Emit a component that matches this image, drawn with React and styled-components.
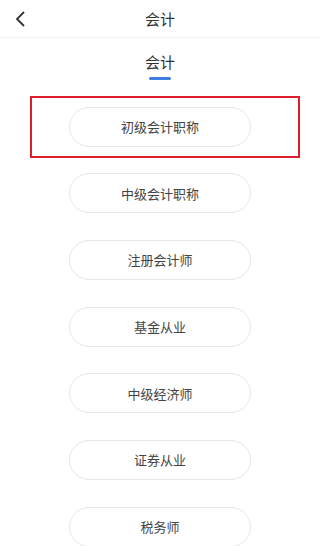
import React from "react";
import styled, { createGlobalStyle } from "styled-components";

const GlobalStyle = createGlobalStyle`
  html, body {
    margin: 0;
    padding: 0;
    background: #ffffff;
  }
  body {
    font-family: "Noto Sans CJK SC", "Noto Sans", sans-serif;
    color: #333333;
  }
`;

const Page = styled.div`
  width: 320px;
  height: 546px;
  overflow: hidden;
  background: #ffffff;
`;

const Header = styled.div`
  position: relative;
  height: 37px;
  display: flex;
  align-items: center;
  justify-content: center;
  border-bottom: 1px solid #f2f2f2;
`;

const BackButton = styled.button`
  position: absolute;
  left: 8px;
  top: 6px;
  width: 24px;
  height: 26px;
  padding: 0;
  border: none;
  background: none;
  display: flex;
  align-items: center;
  justify-content: center;
`;

const Title = styled.div`
  font-size: 15px;
  line-height: 20px;
  color: #333333;
`;

const Tabs = styled.div`
  display: flex;
  justify-content: center;
  padding-top: 14px;
`;

const Tab = styled.div`
  display: flex;
  flex-direction: column;
  align-items: center;
  font-size: 15px;
  line-height: 20px;
  color: #333333;
`;

const TabLine = styled.div`
  width: 22px;
  height: 3px;
  margin-top: 5px;
  border-radius: 2px;
  background: #3e7ee0;
`;

const List = styled.div`
  display: flex;
  flex-direction: column;
  align-items: center;
  gap: 26.7px;
  padding-top: 26.5px;
`;

const Item = styled.div`
  position: relative;
  width: 182px;
  height: 40px;
  box-sizing: border-box;
  border: 1px solid #e6e6e6;
  border-radius: 20px;
  display: flex;
  align-items: center;
  justify-content: center;
  font-size: 13px;
  color: #444444;
  background: #ffffff;
  flex-shrink: 0;

  ${(p) =>
    p.$marked &&
    `
    &::before {
      content: "";
      position: absolute;
      left: -40px;
      right: -50px;
      top: -12px;
      bottom: -12px;
      border: 2px solid #dc1f2b;
      pointer-events: none;
    }
  `}
`;

const items = ["初级会计职称", "中级会计职称", "注册会计师", "基金从业", "中级经济师", "证券从业", "税务师"];

function App() {
  return (
    <Page>
      <GlobalStyle />
      <Header>
        <BackButton>
          <svg width="14" height="18" viewBox="0 0 14 18">
            <polyline points="11,2 4,9 11,16" fill="none" stroke="#333" strokeWidth="1.8" />
          </svg>
        </BackButton>
        <Title>会计</Title>
      </Header>
      <Tabs>
        <Tab>
          会计
          <TabLine />
        </Tab>
      </Tabs>
      <List>
        {items.map((name, i) => (
          <Item key={name} $marked={i === 0}>
            {name}
          </Item>
        ))}
      </List>
    </Page>
  );
}

export default App;
